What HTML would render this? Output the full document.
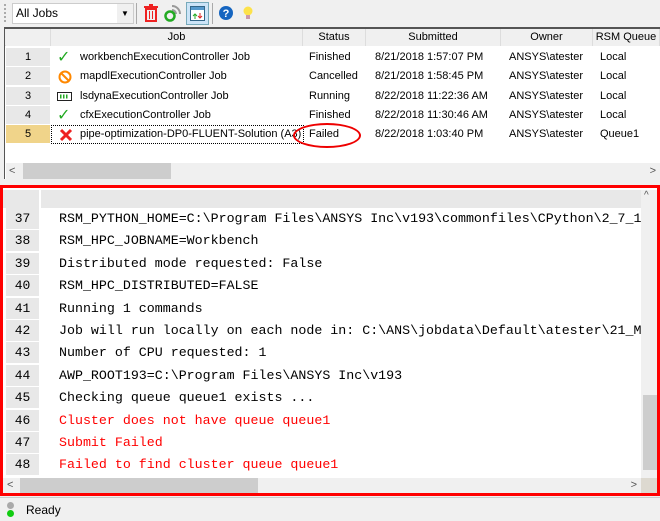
<!DOCTYPE html>
<html><head><style>
*{margin:0;padding:0;box-sizing:border-box}
body{width:660px;height:521px;background:#f0f0f0;font-family:"Liberation Sans",sans-serif;font-size:11px;position:relative;overflow:hidden;color:#000}
.abs{position:absolute}
.tb{left:0;top:0;width:660px;height:27px;background:#f0f0f0}
.grid{left:4px;top:27px;width:656px;height:152px;border-top:2px solid #555;border-left:1px solid #555;background:#fff}
.hdr{top:0;height:17px;background:#f0f0f0;border-bottom:1px solid #ddd}
.hc{position:absolute;top:0;height:17px;line-height:17px;text-align:center;border-right:1px solid #ddd;background:#f0f0f0;white-space:nowrap;overflow:hidden}
.row{position:absolute;left:0;width:655px;height:19px;line-height:19px}
.rn{position:absolute;left:1px;width:44px;height:18px;background:#e8e8e8;text-align:center}
.c{position:absolute;top:0;white-space:nowrap}
.red{left:0;top:185px;width:660px;height:311px;border:3px solid #f00;background:#fff}
.code{font-family:"Liberation Mono",monospace;font-size:13.3px;white-space:nowrap}
.ln{position:absolute;left:3px;width:33px;height:21px;background:#e8e8e8;text-align:center;font-size:13px}
</style></head><body>
<div class="abs tb">
 <div class="abs" style="left:4px;top:4px;width:2px;height:18px;border-left:2px dotted #aaa"></div>
 <div class="abs" style="left:12px;top:3px;width:122px;height:21px;background:#fff;border:1px solid #ccc;line-height:19px;padding-left:3px;font-size:12px">All Jobs<div class="abs" style="right:0;top:0;width:16px;height:19px;background:#f0f0f0;text-align:center;font-size:8px">▼</div></div>
 <div class="abs" style="left:136px;top:3px;width:1px;height:21px;background:#aaa"></div>
 <svg class="abs" style="left:143px;top:4px" width="16" height="18"><rect x="3" y="5" width="10" height="12" fill="none" stroke="#e22" stroke-width="2"/><rect x="1" y="2" width="14" height="2" fill="#e22"/><rect x="6" y="0" width="4" height="2" fill="#e22"/><line x1="6.5" y1="7" x2="6.5" y2="15" stroke="#e22"/><line x1="9.5" y1="7" x2="9.5" y2="15" stroke="#e22"/></svg>
 <svg class="abs" style="left:164px;top:4px" width="18" height="18"><path d="M8 2a8 8 0 0 1 8 8M8 6a4 4 0 0 1 4 4" stroke="#999" stroke-width="2" fill="none"/><circle cx="6" cy="12" r="4.5" fill="none" stroke="#2a2" stroke-width="2.5"/></svg>
 <div class="abs" style="left:186px;top:2px;width:23px;height:23px;background:#cce4f7;border:1px solid #7ab"></div>
 <svg class="abs" style="left:190px;top:6px" width="15" height="15"><rect x="0.5" y="0.5" width="14" height="14" fill="#fff" stroke="#368"/><rect x="1" y="1" width="13" height="3" fill="#59c"/><path d="M5 13V8M3 10l2-2 2 2" stroke="#2a2" fill="none"/><path d="M10 7v5M8 10l2 2 2-2" stroke="#d22" fill="none"/></svg>
 <div class="abs" style="left:212px;top:3px;width:1px;height:21px;background:#aaa"></div>
 <svg class="abs" style="left:219px;top:6px" width="14" height="14"><circle cx="7" cy="7" r="7" fill="#1565c0"/><text x="7" y="11" font-size="11" font-weight="bold" fill="#fff" text-anchor="middle" font-family="Liberation Sans">?</text></svg>
 <svg class="abs" style="left:242px;top:5px" width="12" height="16"><circle cx="6" cy="6" r="4.5" fill="#fde24a"/><rect x="4" y="10" width="4" height="4" fill="#c9a"/></svg>
</div>
<div class="abs grid">
 <div class="abs hdr" style="left:0;width:655px"></div>
 <div class="hc" style="left:1px;width:45px"></div>
 <div class="hc" style="left:46px;width:252px">Job</div>
 <div class="hc" style="left:298px;width:63px">Status</div>
 <div class="hc" style="left:361px;width:135px">Submitted</div>
 <div class="hc" style="left:496px;width:92px">Owner</div>
 <div class="hc" style="left:588px;width:67px">RSM Queue</div>
 <div class="row" style="top:19px"><div class="rn">1</div><div class="c" style="left:52px;color:#2a2;font-size:16px">✓</div><div class="c" style="left:75px">workbenchExecutionController Job</div><div class="c" style="left:304px">Finished</div><div class="c" style="left:370px">8/21/2018 1:57:07 PM</div><div class="c" style="left:504px">ANSYS\atester</div><div class="c" style="left:595px">Local</div></div>
 <div class="row" style="top:38px"><div class="rn">2</div><svg class="c" style="left:53px;top:3px" width="14" height="14"><circle cx="7" cy="7" r="5.5" fill="none" stroke="#f80" stroke-width="2"/><line x1="3" y1="3" x2="11" y2="11" stroke="#f80" stroke-width="2"/></svg><div class="c" style="left:75px">mapdlExecutionController Job</div><div class="c" style="left:304px">Cancelled</div><div class="c" style="left:370px">8/21/2018 1:58:45 PM</div><div class="c" style="left:504px">ANSYS\atester</div><div class="c" style="left:595px">Local</div></div>
 <div class="row" style="top:58px"><div class="rn">3</div><svg class="c" style="left:52px;top:5px" width="16" height="10"><rect x="0.5" y="0.5" width="14" height="8" fill="none" stroke="#222"/><rect x="3" y="2.5" width="1.5" height="4" fill="#2a2"/><rect x="6" y="2.5" width="1.5" height="4" fill="#2a2"/><rect x="9" y="2.5" width="1.5" height="4" fill="#2a2"/></svg><div class="c" style="left:75px">lsdynaExecutionController Job</div><div class="c" style="left:304px">Running</div><div class="c" style="left:370px">8/22/2018 11:22:36 AM</div><div class="c" style="left:504px">ANSYS\atester</div><div class="c" style="left:595px">Local</div></div>
 <div class="row" style="top:77px"><div class="rn">4</div><div class="c" style="left:52px;color:#2a2;font-size:16px">✓</div><div class="c" style="left:75px">cfxExecutionController Job</div><div class="c" style="left:304px">Finished</div><div class="c" style="left:370px">8/22/2018 11:30:46 AM</div><div class="c" style="left:504px">ANSYS\atester</div><div class="c" style="left:595px">Local</div></div>
 <div class="row" style="top:96px"><div class="rn" style="background:#f0d48a">5</div><div class="c" style="left:46px;top:0;width:253px;height:19px;border:1px dotted #000"></div><svg class="c" style="left:54px;top:3px" width="16" height="15"><path d="M2 2L12 12M12 2L2 12" stroke="#e22" stroke-width="3"/></svg><div class="c" style="left:75px">pipe-optimization-DP0-FLUENT-Solution (A3)</div><div class="c" style="left:298px;top:0;width:4px;height:19px;border-left:1px dotted #000"></div><div class="c" style="left:304px">Failed</div><div class="c" style="left:370px">8/22/2018 1:03:40 PM</div><div class="c" style="left:504px">ANSYS\atester</div><div class="c" style="left:595px">Queue1</div></div>
 <div class="abs" style="left:288px;top:94px;width:68px;height:25px;border:2.5px solid #e00;border-radius:50%"></div>
 <div class="abs" style="left:1px;top:134px;width:654px;height:16px;background:#f0f0f0"><div class="abs" style="left:17px;top:0;width:148px;height:16px;background:#cdcdcd"></div><div class="abs" style="left:3px;top:0;font-size:11px;line-height:16px;color:#555">&lt;</div><div class="abs" style="right:4px;top:0;font-size:11px;line-height:16px;color:#555">&gt;</div></div>
</div>
<div class="abs red">
 <div class="abs" style="left:0;top:2px;width:638px;height:18px;background:#e8e8e8"></div>
 <div class="abs" style="left:36px;top:2px;width:2px;height:18px;background:#fff"></div>
 <div class="code">
 <div class="abs" style="left:0;top:19px;width:638px;height:271px;overflow:hidden">
  <div class="abs" style="top:0;left:0"><div class="ln" style="top:1px;line-height:21px">37</div><div class="abs" style="left:56px;top:1px;line-height:21px">RSM_PYTHON_HOME=C:\Program Files\ANSYS Inc\v193\commonfiles\CPython\2_7_1</div></div>
  <div class="abs" style="top:22.4px;left:0"><div class="ln" style="top:1px;line-height:21px">38</div><div class="abs" style="left:56px;top:1px;line-height:21px">RSM_HPC_JOBNAME=Workbench</div></div>
  <div class="abs" style="top:44.8px;left:0"><div class="ln" style="top:1px;line-height:21px">39</div><div class="abs" style="left:56px;top:1px;line-height:21px">Distributed mode requested: False</div></div>
  <div class="abs" style="top:67.2px;left:0"><div class="ln" style="top:1px;line-height:21px">40</div><div class="abs" style="left:56px;top:1px;line-height:21px">RSM_HPC_DISTRIBUTED=FALSE</div></div>
  <div class="abs" style="top:89.6px;left:0"><div class="ln" style="top:1px;line-height:21px">41</div><div class="abs" style="left:56px;top:1px;line-height:21px">Running 1 commands</div></div>
  <div class="abs" style="top:112px;left:0"><div class="ln" style="top:1px;line-height:21px">42</div><div class="abs" style="left:56px;top:1px;line-height:21px">Job will run locally on each node in: C:\ANS\jobdata\Default\atester\21_M</div></div>
  <div class="abs" style="top:134.4px;left:0"><div class="ln" style="top:1px;line-height:21px">43</div><div class="abs" style="left:56px;top:1px;line-height:21px">Number of CPU requested: 1</div></div>
  <div class="abs" style="top:156.8px;left:0"><div class="ln" style="top:1px;line-height:21px">44</div><div class="abs" style="left:56px;top:1px;line-height:21px">AWP_ROOT193=C:\Program Files\ANSYS Inc\v193</div></div>
  <div class="abs" style="top:179.2px;left:0"><div class="ln" style="top:1px;line-height:21px">45</div><div class="abs" style="left:56px;top:1px;line-height:21px">Checking queue queue1 exists ...</div></div>
  <div class="abs" style="top:201.6px;left:0;color:#f00"><div class="ln" style="top:1px;line-height:21px;color:#000">46</div><div class="abs" style="left:56px;top:1px;line-height:21px">Cluster does not have queue queue1</div></div>
  <div class="abs" style="top:224px;left:0;color:#f00"><div class="ln" style="top:1px;line-height:21px;color:#000">47</div><div class="abs" style="left:56px;top:1px;line-height:21px">Submit Failed</div></div>
  <div class="abs" style="top:246.4px;left:0;color:#f00"><div class="ln" style="top:1px;line-height:21px;color:#000">48</div><div class="abs" style="left:56px;top:1px;line-height:21px">Failed to find cluster queue queue1</div></div>
 </div>
 </div>
 <div class="abs" style="left:638px;top:2px;width:16px;height:288px;background:#f0f0f0"><div class="abs" style="left:2px;top:205px;width:14px;height:75px;background:#cdcdcd"></div><div class="abs" style="left:3px;top:0;font-size:10px;color:#555">^</div></div>
 <div class="abs" style="left:0;top:290px;width:638px;height:15px;background:#f0f0f0"><div class="abs" style="left:17px;top:0;width:238px;height:15px;background:#cdcdcd"></div><div class="abs" style="left:4px;top:0;font-size:11px;line-height:15px;color:#555">&lt;</div><div class="abs" style="right:4px;top:0;font-size:11px;line-height:15px;color:#555">&gt;</div></div>
 <div class="abs" style="left:638px;top:290px;width:16px;height:15px;background:#ddd9d0"></div>
</div>
<div class="abs" style="left:0;top:497px;width:660px;height:24px;background:#f0f0f0;border-top:1px solid #ccc">
 <div class="abs" style="left:7px;top:4px;width:7px;height:7px;border-radius:50%;background:#aaa"></div>
 <div class="abs" style="left:7px;top:12px;width:7px;height:7px;border-radius:50%;background:#1c1"></div>
 <div class="abs" style="left:26px;top:5px;font-size:12px">Ready</div>
</div>
</body></html>
